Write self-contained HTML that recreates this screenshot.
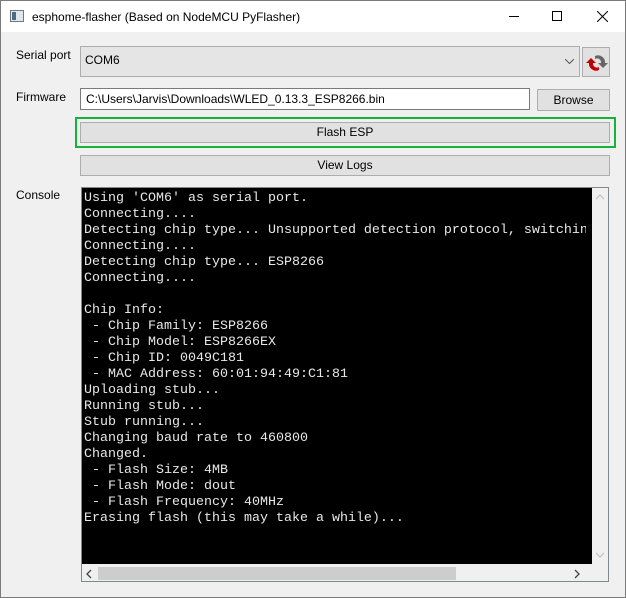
<!DOCTYPE html>
<html><head><style>
*{box-sizing:border-box;margin:0;padding:0}
body{width:626px;height:598px;overflow:hidden;font-family:"Liberation Sans",sans-serif;font-size:12px;color:#000;background:#fff}
.win{position:absolute;left:0;top:0;width:626px;height:598px;border:1px solid #7a7a7a;background:#f0f0f0}
.title{position:absolute;left:0;top:0;width:624px;height:31px;background:#fff}
.abs{position:absolute}
.btn{position:absolute;background:#e1e1e1;border:1px solid #adadad;text-align:center;line-height:19px}
.lbl{position:absolute;font-size:12px}
.con{position:absolute;left:80px;top:186px;width:528px;height:395px;border:1px solid #828790;background:#f0f0f0}
.txt{position:absolute;left:0;top:0;width:504px;height:376px;background:#000;color:#e8e8e8;font-family:"Liberation Mono",monospace;font-size:13.33px;line-height:16px;padding:3px 0 0 2px;white-space:pre;overflow:hidden}
.blk{position:absolute;left:504px;top:0;width:6px;height:376px;background:#000}
</style></head><body>
<div class="win">
<div class="title">
 <div class="abs" style="left:9px;top:9px;width:14px;height:12px;border:1px solid #777;background:#dfe6ee"><div style="position:absolute;left:1px;top:1px;width:4px;height:8px;background:#4a6a8a"></div></div>
 <div class="abs" style="left:31px;top:9px;font-size:12px">esphome-flasher (Based on NodeMCU PyFlasher)</div>
 <div class="abs" style="left:508px;top:15px;width:10px;height:1px;background:#000"></div>
 <div class="abs" style="left:551px;top:10px;width:10px;height:10px;border:1px solid #000"></div>
 <svg class="abs" style="left:596px;top:10px" width="11" height="11"><path d="M0 0L11 11M11 0L0 11" stroke="#000" stroke-width="1"/></svg>
</div>
<div class="lbl" style="left:15px;top:47px">Serial port</div>
<div class="abs" style="left:79px;top:45px;width:500px;height:31px;background:#e5e5e5;border:1px solid #adadad"><span style="position:absolute;left:4px;top:6px">COM6</span>
 <svg class="abs" style="left:484px;top:12px" width="9" height="6"><path d="M0 0L4.5 4.5L9 0" stroke="#555" fill="none"/></svg></div>
<div class="btn" style="left:581px;top:46px;width:28px;height:30px">
 <svg class="abs" style="left:2px;top:3px" width="24" height="24" viewBox="0 0 24 24"><path d="M10 5a7 7 0 0 1 10 7l3 0-5 5-5-5 3 0a4 4 0 0 0-6-4z" fill="#666"/><path d="M14 19a7 7 0 0 1-10-7l-3 0 5-5 5 5-3 0a4 4 0 0 0 6 4z" fill="#c00000"/></svg></div>
<div class="lbl" style="left:15px;top:89px">Firmware</div>
<div class="abs" style="left:79px;top:87px;width:450px;height:22px;background:#fff;border:1px solid #7a7a7a;padding:3px 5px">C:\Users\Jarvis\Downloads\WLED_0.13.3_ESP8266.bin</div>
<div class="btn" style="left:536px;top:88px;width:73px;height:22px;line-height:20px">Browse</div>
<div class="abs" style="left:74px;top:116px;width:541px;height:31px;border:2px solid #16b33a"></div>
<div class="btn" style="left:79px;top:121px;width:530px;height:21px">Flash ESP</div>
<div class="btn" style="left:79px;top:154px;width:530px;height:21px">View Logs</div>
<div class="lbl" style="left:15px;top:187px">Console</div>
<div class="con">
<div class="txt">Using 'COM6' as serial port.
Connecting....
Detecting chip type... Unsupported detection protocol, switching
Connecting....
Detecting chip type... ESP8266
Connecting....

Chip Info:
 - Chip Family: ESP8266
 - Chip Model: ESP8266EX
 - Chip ID: 0049C181
 - MAC Address: 60:01:94:49:C1:81
Uploading stub...
Running stub...
Stub running...
Changing baud rate to 460800
Changed.
 - Flash Size: 4MB
 - Flash Mode: dout
 - Flash Frequency: 40MHz
Erasing flash (this may take a while)...</div>
<div class="blk"></div>
<svg class="abs" style="left:513px;top:6px" width="10" height="6"><path d="M1 5L5 1L9 5" stroke="#bbb" fill="none"/></svg>
<svg class="abs" style="left:513px;top:364px" width="10" height="6"><path d="M1 1L5 5L9 1" stroke="#bbb" fill="none"/></svg>
<div class="abs" style="left:16px;top:379px;width:358px;height:13px;background:#cdcdcd"></div>
<svg class="abs" style="left:4px;top:381px" width="6" height="10"><path d="M5 1L1 5L5 9" stroke="#444" stroke-width="1.3" fill="none"/></svg>
<svg class="abs" style="left:492px;top:381px" width="6" height="10"><path d="M1 1L5 5L1 9" stroke="#444" stroke-width="1.3" fill="none"/></svg>
</div>
</div>
</body></html>
